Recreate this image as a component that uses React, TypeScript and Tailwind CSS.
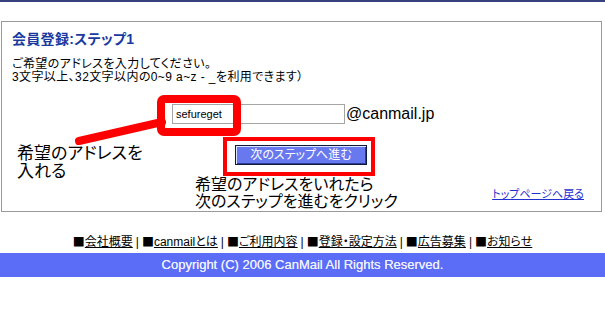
const jp = "font-['Liberation_Sans','Noto_Sans_CJK_JP',sans-serif] [font-feature-settings:'palt']";

const footerLinks = ["会社概要", "canmailとは", "ご利用内容", "登録・設定方法", "広告募集", "お知らせ"];

export default function App() {
  return (
    <div className={`relative w-[605px] h-[316px] overflow-hidden bg-white text-black ${jp}`}>
      <div className="h-[2px] bg-[#39407f]" />

      {/* main panel */}
      <div className="mt-[19px] ml-[1px] w-[601px] h-[191px] border border-[#9a9a9a] px-[10px] pt-[9px]">
        <h2 className="text-[14px] leading-[16px] font-bold text-[#1b3a9e] tracking-[0.3px]">会員登録:ステップ1</h2>
        <p className="mt-[11px] text-[12px] leading-[13px] tracking-[0.4px]">
          ご希望のアドレスを入力してください。
          <br />
          3文字以上、32文字以内の0~9 a~z - _を利用できます）
        </p>

        <div className="mt-[20px] ml-[160px] flex items-center">
          <input
            readOnly
            defaultValue="sefureget"
            className="w-[173px] h-[20px] border border-[#a5a5a5] px-[3px] text-[11px] font-['Liberation_Sans',sans-serif] outline-none"
          />
          <span className="ml-[1px] text-[16px] leading-[20px]">@canmail.jp</span>
        </div>

        <div className="mt-[18px] ml-[223px]">
          <button className="w-[132px] h-[20px] bg-[#6878ee] border border-[#121a3c] text-white text-[12px] leading-[16px] shadow-[inset_1px_1px_0_#dfe4ff,inset_-1px_-1px_0_#2c3a9a]">
            次のステップへ進む
          </button>
        </div>

        <div className="mt-[22px] flex justify-end pr-[7px]">
          <a href="#" className="text-[11px] leading-[13px] text-[#1f2fd0] underline">トップページへ戻る</a>
        </div>
      </div>

      {/* footer */}
      <div className="mt-[22px] flex justify-center text-[12px] leading-[16px]">
        {footerLinks.map((l, i) => (
          <span key={l} className="flex">
            {i > 0 && <span className="px-[3px]">|</span>}
            <span className="font-['Noto_Sans_CJK_JP',sans-serif] [font-feature-settings:normal]">■</span>
            <a href="#" className="underline">{l}</a>
          </span>
        ))}
      </div>
      <div className="mt-[3px] h-[24px] bg-[#5b6cf6] flex items-center justify-center text-[13px] text-[#eef0ff] font-['Liberation_Sans',sans-serif] [text-shadow:0_0_0.3px_#eef0ff]">
        Copyright (C) 2006 CanMail All Rights Reserved.
      </div>

      {/* annotations */}
      <div className="absolute left-[157px] top-[95px] w-[84px] h-[41px] border-[8px] border-[#f00] rounded-[7px]" />
      <svg className="absolute left-0 top-0" width="605" height="316">
        <line x1="79" y1="141" x2="162" y2="122" stroke="#f00" strokeWidth="8" strokeLinecap="round" />
      </svg>
      <div className="absolute left-[223px] top-[137px] w-[152px] h-[39px] border-[4px] border-[#f00]" />
      <div className="absolute left-[17px] top-[145px] text-[17px] leading-[18px]">
        希望のアドレスを
        <br />
        入れる
      </div>
      <div className="absolute left-[195px] top-[176px] text-[16px] leading-[17px]">
        希望のアドレスをいれたら
        <br />
        次のステップを進むをクリック
      </div>
    </div>
  );
}
